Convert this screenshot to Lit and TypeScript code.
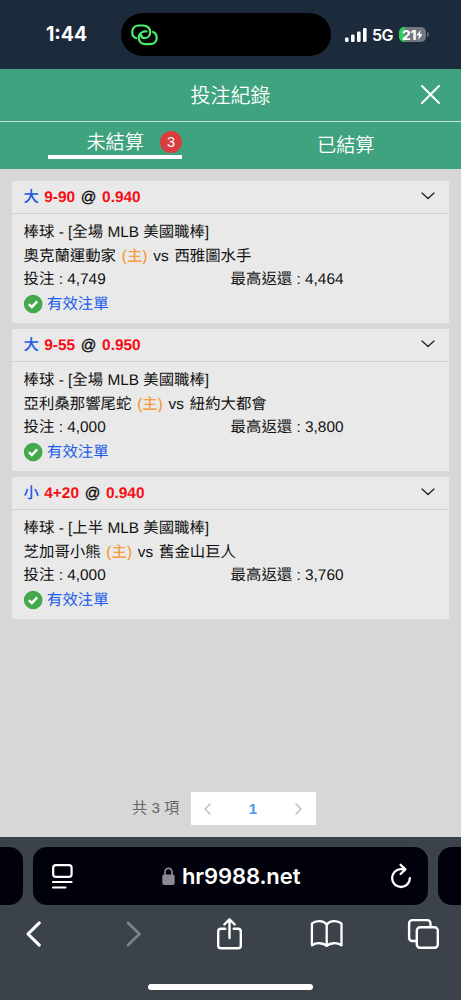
import { LitElement, html, css, svg } from "lit";
import { customElement, property } from "lit/decorators.js";

interface Bet {
  side: string;
  line: string;
  odds: string;
  league: string;
  home: string;
  away: string;
  stake: string;
  payout: string;
}

const bets: Bet[] = [
  { side: "大", line: "9-90", odds: "0.940", league: "棒球 - [全場 MLB 美國職棒]", home: "奧克蘭運動家", away: "西雅圖水手", stake: "4,749", payout: "4,464" },
  { side: "大", line: "9-55", odds: "0.950", league: "棒球 - [全場 MLB 美國職棒]", home: "亞利桑那響尾蛇", away: "紐約大都會", stake: "4,000", payout: "3,800" },
  { side: "小", line: "4+20", odds: "0.940", league: "棒球 - [上半 MLB 美國職棒]", home: "芝加哥小熊", away: "舊金山巨人", stake: "4,000", payout: "3,760" },
];

const icon = (w: number, h: number, body: unknown) => html`<svg
  width=${w} height=${h} viewBox="0 0 ${w} ${h}" fill="none"
  stroke="currentColor" stroke-linecap="round" stroke-linejoin="round"
>${body}</svg>`;

@customElement("bet-card")
export class BetCard extends LitElement {
  @property({ attribute: false }) bet!: Bet;

  static styles = css`
    :host { display: block; height: 142px; background: #e9e9e9; color: #111; font-size: 15.4px; text-rendering: geometricPrecision; }
    svg { display: block; overflow: visible; }
    .head { box-sizing: border-box; height: 33px; border-bottom: 1px solid #d2d2d2; padding: 0 13px 0 11.6px; display: flex; align-items: center; gap: 5.7px; font-weight: 700; line-height: 32px; }
    .head .red, .head .at { padding-top: 1px; }
    .side { color: #1b5be8; font-weight: 500; width: 15px; padding-top: 1px; }
    .red { color: #f80b12; }
    .at { font-weight: 500; -webkit-text-stroke: 0.35px #111; }
    .arrow { margin-left: auto; padding-bottom: 2px; }
    .body { padding: 7px 12px 0 11.6px; }
    .row { height: 23.6px; line-height: 23.6px; display: flex; white-space: pre; }
    .teams { gap: 5.8px; }
    .home { color: #f7931e; }
    .half { width: 207px; }
    .valid { height: 25px; line-height: 25px; align-items: center; gap: 5.4px; color: #1b5be8; }
    .valid span { padding-top: 1px; }
  `;

  render() {
    const b = this.bet;
    return html`
      <div class="head">
        <span class="side">${b.side}</span><span class="red">${b.line}</span>
        <span class="at">@</span><span class="red">${b.odds}</span>
        <span class="arrow">${icon(16, 10, svg`<path d="M2 2l6 5.6L14 2" stroke="#222" stroke-width="1.3"/>`)}</span>
      </div>
      <div class="body">
        <div class="row">${b.league}</div>
        <div class="row teams"><span>${b.home}</span><span class="home">(主)</span><span>vs</span><span>${b.away}</span></div>
        <div class="row"><span class="half">投注 : ${b.stake}</span><span>最高返還 : ${b.payout}</span></div>
        <div class="row valid">
          ${icon(18, 18, svg`<circle cx="9.2" cy="9" r="9.3" fill="#44a94d" stroke="none"/><path d="M4.9 9.2l2.9 2.8 5.4-5.600" stroke="#fff" stroke-width="2.4" stroke-linecap="butt" stroke-linejoin="miter"/>`)}
          <span>有效注單</span>
        </div>
      </div>`;
  }
}

@customElement("app-root")
export class AppRoot extends LitElement {
  static styles = css`
    :host { display: flex; flex-direction: column; width: 461px; height: 1000px; overflow: hidden; background: #d7d7d7; font-family: "Liberation Sans", "Noto Sans CJK TC", sans-serif; }
    svg { display: block; overflow: visible; flex: none; }
    .status { box-sizing: border-box; height: 69px; background: #1c2b3c; color: #fff; display: grid; grid-template-columns: 121px 210px 130px; padding-top: 13px; font-family: Inter, sans-serif; }
    .clock { padding-left: 46px; line-height: 43px; font-size: 19.4px; font-weight: 700; }
    .island { height: 43px; border-radius: 22px; background: #000; color: #4fed6b; display: flex; align-items: center; padding-left: 10px; box-sizing: border-box; }
    .signals { display: flex; align-items: center; padding-left: 14px; height: 43px; }
    .net { font-size: 16px; font-weight: 600; margin-left: 5px; width: 27px; letter-spacing: -0.5px; }
    .battery { width: 27px; height: 15.5px; border-radius: 5px; background: linear-gradient(90deg, #35c759 21%, #70777f 21%); display: flex; align-items: center; padding-left: 3px; box-sizing: border-box; font-size: 13.5px; font-weight: 800; letter-spacing: -0.2px; }
    .nub { width: 1.5px; height: 5px; border-radius: 0 2px 2px 0; background: #59636e; margin-left: 1px; }
    .title { box-sizing: border-box; height: 53px; background: #40a380; color: #fff; border-bottom: 1px solid #c9e3da; display: grid; grid-template-columns: 61px 1fr 61px; align-items: center; text-align: center; font-size: 20px; font-weight: 350; font-family: "Noto Sans CJK TC", sans-serif; }
    .heading { padding-bottom: 2px; }
    .close { display: flex; justify-content: center; padding-bottom: 1px; }
    .tabs { height: 47px; background: #40a380; color: #fff; display: grid; grid-template-columns: 1fr 1fr; font-size: 19.2px; font-weight: 350; font-family: "Noto Sans CJK TC", sans-serif; }
    .tab { display: flex; justify-content: center; line-height: 44px; }
    .active { box-sizing: border-box; width: 134px; height: 37px; margin-left: 48px; border-bottom: 4px solid #fff; line-height: 38px; justify-content: flex-end; align-items: center; gap: 16px; }
    .label { padding-top: 4px; }
    .count { width: 22px; height: 22px; border-radius: 50%; background: #d93d3e; text-align: center; font: 14.5px/22px "Liberation Sans", sans-serif; margin-top: 6px; }
    .list { box-sizing: border-box; height: 611px; padding: 12px 12px 0; display: flex; flex-direction: column; gap: 6px; }
    .pager { flex: 1; display: flex; align-items: flex-start; padding: 12px 0 0 132px; }
    .total { color: #666; width: 59px; line-height: 32px; font-size: 15.2px; }
    .pages { width: 125px; height: 33px; background: #fff; display: flex; align-items: center; justify-content: space-between; padding: 0 14px 0 13px; box-sizing: border-box; color: #bdbdbd; }
    .page { color: #4698ee; font-weight: 700; font-size: 15px; }
    .browser { height: 163px; background: #3b424a; color: #fff; box-sizing: border-box; padding-top: 10px; }
    .addresses { display: grid; grid-template-columns: 23px 395px 23px; gap: 10px; height: 58px; }
    .pill { background: #01010b; border-radius: 14px; }
    .left { border-radius: 0 14px 14px 0; }
    .right { border-radius: 14px 0 0 14px; }
    .address { display: flex; align-items: center; padding: 0 17px 0 19px; }
    .url { flex: 1; display: flex; align-items: center; gap: 7px; padding-left: 89px; font: 600 22px Inter, sans-serif; }
    .host { letter-spacing: -0.1px; }
    .tools { height: 57px; display: grid; grid-template-columns: 67px 134px 57px 137px 57px; align-items: center; justify-items: center; }
    .off { color: #7d8289; }
    .handle { width: 165px; height: 6px; border-radius: 3px; background: #fff; margin: 22px 0 0 148px; }
  `;

  render() {
    return html`
      <div class="status">
        <div class="clock">1:44</div>
        <div class="island">
          ${icon(27, 22, svg`<g stroke-width="2.2">
            <path d="M5.3 14.2C2.7 13.4 1.2 11.1 1.2 8.2 1.2 4.2 4 1.5 7.9 1.5h4.4c3.9 0 6.9 2.7 6.9 6.5 0 3.5-2.4 6.1-5.4 6.1-2.2 0-3.6-1.3-3.600-3.200"/>
            <path d="M15.4 7.4c-4-.7-7.600 2.200-7.600 6.200 0 4 2.800 6.600 6.700 6.600h4.500c3.900 0 6.700-2.700 6.700-6.400 0-2.800-1.400-5-3.700-5.900"/>
          </g>`)}
        </div>
        <div class="signals">
          ${icon(22, 14, svg`<g fill="#fff" stroke="none"><rect y="9.5" width="3.600" height="4.500" rx="1.2"/><rect x="6" y="6.5" width="3.600" height="7.500" rx="1.2"/><rect x="12" y="3.5" width="3.600" height="10.500" rx="1.2"/><rect x="18" width="3.600" height="14" rx="1.2"/></g>`)}
          <span class="net">5G</span>
          <span class="battery">21${icon(7, 10, svg`<path d="M4.6 0L.4 5.6H3L2.200 10l4.400-5.800H4z" fill="#fff" stroke="none"/>`)}</span>
          <span class="nub"></span>
        </div>
      </div>
      <div class="title">
        <span></span><span class="heading">投注紀錄</span>
        <span class="close">${icon(19, 19, svg`<path d="M1 1l17 17M18 1L1 18" stroke-width="1.9"/>`)}</span>
      </div>
      <div class="tabs">
        <div class="tab active"><span class="label">未結算</span><span class="count">3</span></div>
        <div class="tab">已結算</div>
      </div>
      <div class="list">${bets.map((b) => html`<bet-card .bet=${b}></bet-card>`)}</div>
      <div class="pager">
        <span class="total">共 3 項</span>
        <div class="pages">
          ${icon(7, 12, svg`<path d="M6 1L1 6l5 5" stroke-width="1.4"/>`)}
          <span class="page">1</span>
          ${icon(7, 12, svg`<path d="M1 1l5 5-5 5" stroke-width="1.4"/>`)}
        </div>
      </div>
      <div class="browser">
        <div class="addresses">
          <div class="pill left"></div>
          <div class="pill address">
            ${icon(21, 25, svg`<rect x="1.2" y="1.2" width="18.4" height="11.6" rx="2.6" stroke-width="2.2"/><path d="M1 18h18.600M1 23.500h12.500" stroke-width="2.1"/>`)}
            <div class="url">
              ${icon(13, 18, svg`<rect x=".3" y="7.5" width="12.4" height="10.5" rx="2" fill="#8c8a96" stroke="none"/><path d="M3 8V4.8a3.5 3.5 0 0 1 7 0V8" stroke="#8c8a96" stroke-width="1.7"/>`)}
              <span class="host">hr9988.net</span>
            </div>
            ${icon(20, 24, svg`<path d="M11.5 5.2H10a8.9 8.9 0 1 0 8.9 8.9M9.6.8l4.800 4.600-4.800 4.600" stroke-width="2.3"/>`)}
          </div>
          <div class="pill right"></div>
        </div>
        <div class="tools">
          ${icon(14, 24, svg`<path d="M12.3.8L1 12l11.3 11.200" stroke-width="3.1"/>`)}
          <span class="off">${icon(14, 24, svg`<path d="M1 1l11.500 11L1 23" stroke-width="2.8"/>`)}</span>
          ${icon(26, 32, svg`<path d="M8.3 10.7H4a2.8 2.8 0 0 0-2.8 2.8v14A2.8 2.8 0 0 0 4 30.3h17a2.8 2.8 0 0 0 2.8-2.8v-14a2.8 2.8 0 0 0-2.8-2.8h-4.3M12.5 20V1.500M7.300 6.500l5.200-5.200 5.200 5.200" stroke-width="2.4"/>`)}
          ${icon(32, 27, svg`<path d="M15.7 4.500C12.200.3 5.200.2.9 3.500v21.800c4.500-3 11.300-2.700 14.800.6 3.500-3.300 10.300-3.600 14.800-.6V3.500C26.200.2 19.200.3 15.700 4.500zV25.500" stroke-width="2.3"/>`)}
          ${icon(31, 30, svg`<rect x="8.8" y="8.3" width="21" height="20.5" rx="3.2" stroke-width="2.4"/><path d="M8.5 22H4.300a3.200 3.200 0 0 1-3.200-3.200V4.300a3.200 3.200 0 0 1 3.200-3.200h15a3.200 3.200 0 0 1 3.200 3.200V8" stroke-width="2.4"/>`)}
        </div>
        <div class="handle"></div>
      </div>`;
  }
}
